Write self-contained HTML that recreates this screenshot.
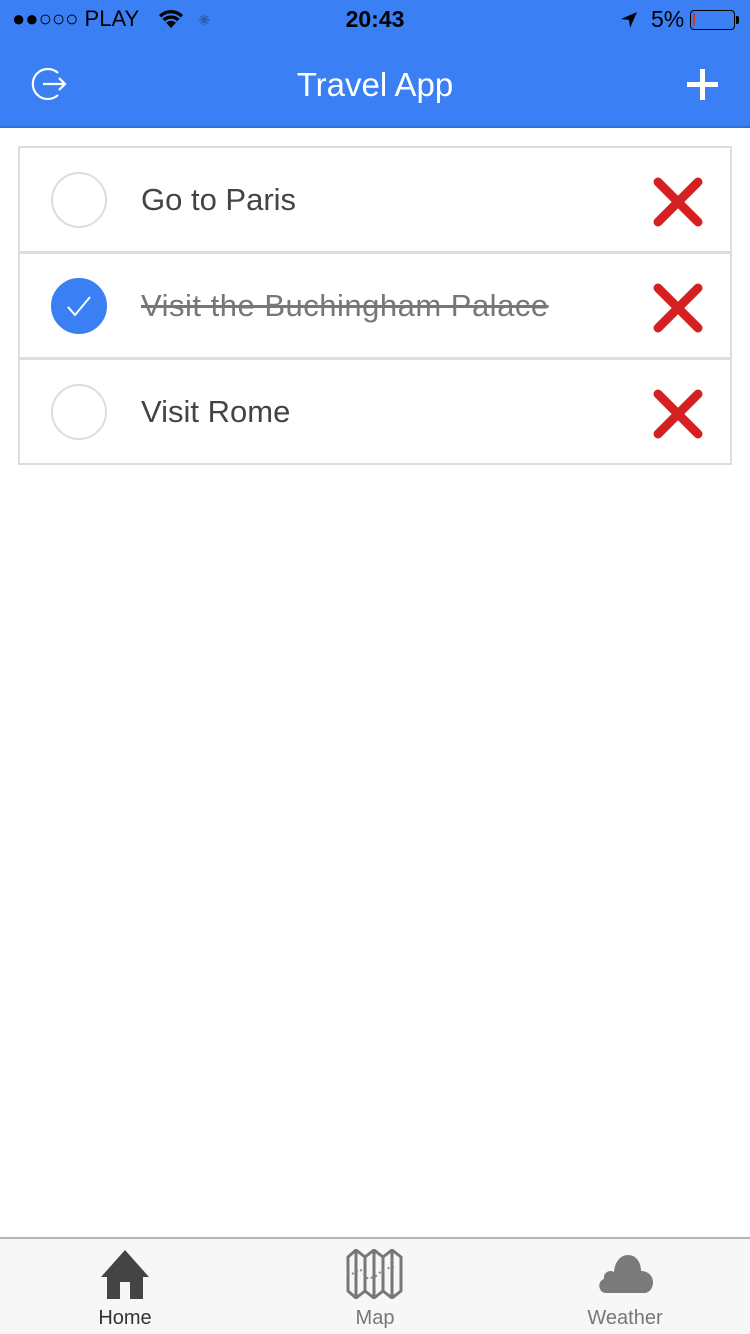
<!DOCTYPE html>
<html><head><style>
*{margin:0;padding:0;box-sizing:border-box}
body{width:750px;height:1334px;position:relative;background:#fff;font-family:"Liberation Sans",sans-serif;overflow:hidden}
.hdr{position:absolute;left:0;top:0;width:750px;height:128px;background:#3a80f4;border-bottom:2px solid #2f6fd8}
.abs{position:absolute}
.row{position:absolute;left:18px;width:714px;height:107px;border:2px solid #ddd}
.row .t{position:absolute;left:121px;top:34px;font-size:31px;color:#444}
.circ{position:absolute;left:31px;top:24px;width:56px;height:56px;border-radius:50%;border:2px solid #ddd}
.x{position:absolute;left:633px;top:29px}
.tab{position:absolute;top:1237px;left:0;width:750px;height:97px;background:#f7f7f7;border-top:2px solid #b5b5b5}
.lbl{position:absolute;top:68px;font-size:20px;width:200px;text-align:center}
</style></head><body>
<div class="hdr">
 <div class="abs" style="left:12px;top:6px;font-size:22px;color:#000">●●○○○ PLAY</div>
 <svg class="abs" style="left:158px;top:9px" width="26" height="20" viewBox="0 0 26 20"><path d="M13 19 L1 6 A17 17 0 0 1 25 6Z" fill="#000"/><path d="M4 9 A13 13 0 0 1 22 9" stroke="#3a80f4" stroke-width="2" fill="none"/><path d="M7.5 13 A8 8 0 0 1 18.5 13" stroke="#3a80f4" stroke-width="2" fill="none"/></svg>
 <div class="abs" style="left:196px;top:8px;font-size:20px;color:#2a5fb0">⁕</div>
 <div class="abs" style="left:0;width:750px;text-align:center;top:6px;font-size:23px;font-weight:bold;color:#000">20:43</div>
 <svg class="abs" style="left:620px;top:11px" width="18" height="18" viewBox="0 0 18 18"><path d="M17 1 L1 8 L9 9 L10 17Z" fill="#000"/></svg>
 <div class="abs" style="left:651px;top:6px;font-size:23px;color:#000">5%</div>
 <div class="abs" style="left:690px;top:10px;width:45px;height:20px;border:1.5px solid #000;border-radius:4px"><div style="position:absolute;left:2px;top:2px;width:2px;height:13px;background:#e0302a"></div></div>
 <div class="abs" style="left:736px;top:16px;width:3px;height:8px;background:#000;border-radius:0 2px 2px 0"></div>
 <svg class="abs" style="left:31px;top:66px" width="38" height="36" viewBox="0 0 38 36"><path d="M27 7 A15 15 0 1 0 27 29" stroke="#fff" stroke-width="2.2" fill="none"/><path d="M12 18 H34 M28 12 L34 18 L28 24" stroke="#fff" stroke-width="2.2" fill="none"/></svg>
 <div class="abs" style="left:0;width:750px;text-align:center;top:66px;font-size:33px;color:#fff">Travel App</div>
 <svg class="abs" style="left:686px;top:68px" width="33" height="33"><path d="M16.5 1V32M1 16.5H32" stroke="#fff" stroke-width="5"/></svg>
</div>
<div class="row" style="top:146px"><div class="circ"></div><div class="t">Go to Paris</div>
<svg class="x" width="50" height="50" viewBox="0 0 50 50"><path d="M5 5L45 45M45 5L5 45" stroke="#d42020" stroke-width="9" stroke-linecap="round"/></svg></div>
<div class="row" style="top:252px"><div class="circ" style="background:#3a80f4;border-color:#3a80f4"><svg width="52" height="52" viewBox="0 0 52 52"><path d="M15 27 L22 35 L37 17" stroke="#fff" stroke-width="2" fill="none"/></svg></div><div class="t" style="color:#777;text-decoration:line-through;letter-spacing:0.5px">Visit the Buchingham Palace</div>
<svg class="x" width="50" height="50" viewBox="0 0 50 50"><path d="M5 5L45 45M45 5L5 45" stroke="#d42020" stroke-width="9" stroke-linecap="round"/></svg></div>
<div class="row" style="top:358px"><div class="circ"></div><div class="t">Visit Rome</div>
<svg class="x" width="50" height="50" viewBox="0 0 50 50"><path d="M5 5L45 45M45 5L5 45" stroke="#d42020" stroke-width="9" stroke-linecap="round"/></svg></div>
<div class="tab">
 <svg class="abs" style="left:100px;top:10px" width="50" height="50" viewBox="0 0 50 50"><path d="M25 1 L1 28 H7 V50 H20 V33 H30 V50 H43 V28 H49Z" fill="#444"/></svg>
 <div class="lbl" style="left:25px;color:#333">Home</div>
 <svg class="abs" style="left:346px;top:10px" width="58" height="50" viewBox="0 0 58 50"><path d="M2 8 L10 1 L19 8 L28 1 L37 8 L46 1 L55 8 V42 L46 49 L37 42 L28 49 L19 42 L10 49 L2 42Z M10 1 V49 M19 8 V42 M28 1 V49 M37 8 V42 M46 1 V49" stroke="#777" stroke-width="3" fill="none" stroke-linejoin="round"/><path d="M6 25 L14 20 L22 30 L30 27 L38 20 L48 18" stroke="#888" stroke-width="2" stroke-dasharray="2 3" fill="none"/></svg>
 <div class="lbl" style="left:275px;color:#777">Map</div>
 <svg class="abs" style="left:596px;top:12px" width="60" height="44" viewBox="0 0 60 44"><path d="M10 42 C2 42 1 30 8 28 C7 22 13 18 18 21 C19 10 25 4 32 4 C40 4 45 11 45 20 C52 20 57 25 57 31 C57 38 53 42 48 42Z" fill="#7a7a7a"/></svg>
 <div class="lbl" style="left:525px;color:#777">Weather</div>
</div>
</body></html>
